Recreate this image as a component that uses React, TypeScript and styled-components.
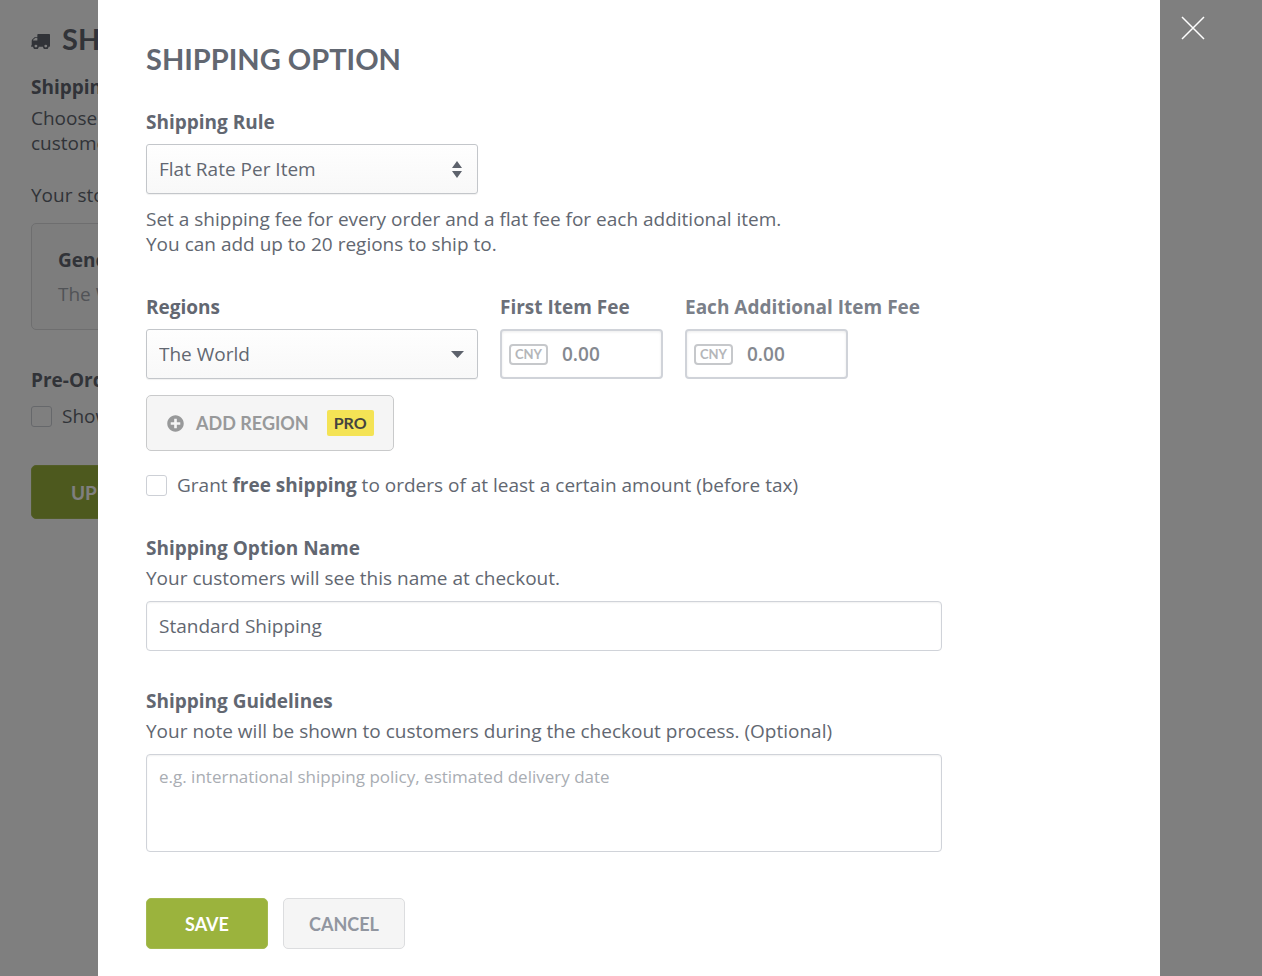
import React from "react";
import styled, { createGlobalStyle, css } from "styled-components";
import { FaPlusCircle } from "react-icons/fa";

const GlobalStyle = createGlobalStyle`
  *, *::before, *::after { box-sizing: border-box; }
  html, body { margin: 0; background: #fff; }
  body {
    font-family: "Open Sans", "Noto Sans", sans-serif;
    font-size: 19px;
    line-height: 25px;
    color: #626771;
  }
  button, input, select, textarea { font: inherit; color: inherit; margin: 0; }
`;

const displayFont = css`
  font-family: Lato, "Open Sans", sans-serif;
  font-weight: 700;
  text-transform: uppercase;
`;

/* Shared pieces */

const Title = styled.h2`
  ${displayFont}
  margin: 0;
  font-size: 29px;
  line-height: 36px;
`;

const Label = styled.label<{ $tone?: string }>`
  display: block;
  font-weight: 700;
  white-space: nowrap;
  color: ${(p) => p.$tone ?? "inherit"};
`;

const Text = styled.p`
  margin: 0;
`;

const Checkbox = styled.input.attrs({ type: "checkbox" })`
  appearance: none;
  flex: none;
  width: 21px;
  height: 21px;
  background: #fff;
  border: 1px solid #cdd0d6;
  border-radius: 3px;

  &:checked {
    background: #9bb33d;
  }
`;

const CheckRow = styled.label`
  display: flex;
  align-items: center;
  gap: 10px;
`;

const Button = styled.button<{ $primary?: boolean }>`
  ${displayFont}
  display: inline-flex;
  align-items: center;
  justify-content: center;
  height: 51px;
  padding: 2px 25px 0;
  min-width: 122px;
  border: 1px solid ${(p) => (p.$primary ? "#a4ba50" : "#dcdddf")};
  border-radius: 5px;
  background: ${(p) => (p.$primary ? "#9bb33d" : "#f5f5f5")};
  color: ${(p) => (p.$primary ? "#fff" : "#9196a0")};
  font-size: 18px;
  cursor: pointer;
`;

/* Page behind the dialog */

const Page = styled.main`
  min-height: 100vh;
  max-width: 900px;
  padding: 21px 31px;
  overflow: hidden;
`;

const PageHeader = styled.header`
  display: flex;
  align-items: center;
  gap: 12px;
  margin-bottom: 18px;

  svg {
    margin-top: 4px;
  }
`;

const PageSection = styled.section`
  display: flex;
  flex-direction: column;
  align-items: flex-start;
  gap: 6px;
  white-space: nowrap;
`;

const SectionName = styled.h3`
  margin: 0;
  font-size: 19px;
  line-height: 25px;
`;

const StoreNote = styled(Text)`
  margin-top: 21px;
`;

const OptionCard = styled.article`
  display: flex;
  flex-direction: column;
  gap: 9px;
  width: 100%;
  margin: 9px 0 38px;
  padding: 24px 26px 22px;
  border: 1px solid #dcdddf;
  border-radius: 5px;
  background: #fafafa;
`;

const Muted = styled.span`
  color: #a3a7ae;
`;

const PageCheckRow = styled(CheckRow)`
  margin-top: 5px;
`;

const UpdateButton = styled(Button)`
  height: 54px;
  margin-top: 30px;
  padding: 0 39px;
  font-size: 19px;
`;

/* Dialog */

const Overlay = styled.div`
  position: fixed;
  inset: 0;
  display: flex;
  align-items: flex-start;
  background: rgba(0, 0, 0, 0.5);
  overflow: hidden;
`;

const Dialog = styled.section`
  flex: 1;
  min-width: 0;
  height: 100%;
  margin-left: 98px;
  padding: 41px 48px 27px;
  background: #fff;
  overflow: hidden;
`;

const CloseRail = styled.div`
  display: flex;
  justify-content: flex-start;
  width: 102px;
  padding: 12px 17px;
`;

const CloseButton = styled.button`
  display: flex;
  padding: 4px;
  border: 0;
  background: none;
  cursor: pointer;
`;

const Form = styled.form`
  display: flex;
  flex-direction: column;
  align-items: flex-start;
  gap: 38px;
  max-width: 796px;
  margin-top: 33px;
`;

const Group = styled.div`
  width: 100%;
`;

const Hint = styled(Text)<{ $below?: boolean }>`
  margin: ${(p) => (p.$below ? "13px 0 0" : "5px 0 10px")};
`;

const SelectWrap = styled.div`
  position: relative;
  width: 332px;
  margin-top: 9px;

  svg {
    position: absolute;
    top: 0;
    right: 13px;
    height: 100%;
    pointer-events: none;
  }
`;

const Select = styled.select`
  appearance: none;
  display: block;
  width: 100%;
  height: 50px;
  padding: 0 40px 0 12px;
  border: 1px solid #c3c6ca;
  border-radius: 3px;
  background: linear-gradient(#fefefe, #f8f8f8);
  box-shadow: 0 1px 1px rgba(0, 0, 0, 0.06);
`;

const field = css`
  display: block;
  width: 100%;
  border: 1px solid #d0d3d9;
  border-radius: 4px;
  background: #fff;
  box-shadow: inset 0 1px 2px rgba(0, 0, 0, 0.06);
`;

const TextField = styled.input`
  ${field}
  height: 50px;
  padding: 0 12px;
`;

const TextArea = styled.textarea`
  ${field}
  height: 98px;
  padding: 9px 12px;
  font-size: 17px;
  resize: none;

  &::placeholder {
    color: #a9adb3;
    opacity: 1;
  }
`;

const RegionRow = styled.div`
  display: flex;
  align-items: flex-start;
  gap: 22px;
`;

const FeeBox = styled.div`
  display: flex;
  align-items: center;
  gap: 14px;
  width: 163px;
  height: 50px;
  margin-top: 9px;
  padding: 0 7px;
  border: 2px solid #d0d3d9;
  border-radius: 4px;
  background: #fff;
  box-shadow: inset 0 1px 3px rgba(0, 0, 0, 0.08);
`;

const Currency = styled.span`
  ${displayFont}
  flex: none;
  width: 39px;
  border: 2px solid #c6c8cb;
  border-radius: 4px;
  color: #b4b6b9;
  font-size: 13px;
  line-height: 17px;
  text-align: center;
`;

const FeeInput = styled.input`
  flex: 1;
  min-width: 0;
  padding: 0;
  border: 0;
  outline: 0;
  background: none;
  color: #858990;
  font-weight: 600;
`;

const AddRegion = styled(Button)`
  gap: 12px;
  height: 56px;
  margin: 16px 0 22px;
  padding: 0 19px 0 20px;
  border-color: #c9cacb;
  color: #98999a;
`;

const ProTag = styled.span`
  margin-left: 6px;
  padding: 0 7px;
  border-radius: 2px;
  background: #f4e355;
  color: #44443f;
  font-size: 16px;
  line-height: 26px;
`;

const Actions = styled.div`
  display: flex;
  gap: 15px;
  margin-top: 8px;
`;

const TruckIcon = () => (
  <svg width="19" height="15" viewBox="64 320 1728 1344" fill="currentColor" aria-hidden="true">
    <path d="M640 1408q0-52-38-90t-90-38-90 38-38 90 38 90 90 38 90-38 38-90zM256 896h384v-256h-158q-13 0-22 9l-195 195q-9 9-9 22v30zM1536 1408q0-52-38-90t-90-38-90 38-38 90 38 90 90 38 90-38 38-90zM1792 384v1024q0 15-4 26.500t-13.500 18.500-16.500 11.500-23.500 6-22.500 2-25.500 0-22.500-.5q0 106-75 181t-181 75-181-75-75-181H768q0 106-75 181t-181 75-181-75-75-181h-64q-3 0-22.500.5t-25.500 0-22.500-2-23.500-6-16.500-11.500-13.500-18.500-4-26.500q0-26 19-45t45-19v-320q0-8-.5-35t0-38 2.500-34.500 6.500-37 14-30.500 22.500-30l198-198q19-19 50.500-32t58.500-13h160V384q0-26 19-45t45-19h1024q26 0 45 19t19 45z" />
  </svg>
);

const SortIcon = () => (
  <svg width="14" viewBox="0 0 14 50" fill="#5d626c" aria-hidden="true">
    <path d="M6 17l5 7H1zM6 34l-5-7h10z" />
  </svg>
);

const CaretIcon = () => (
  <svg width="14" viewBox="0 0 14 50" fill="#5d626c" aria-hidden="true">
    <path d="M0 22h13l-6.500 7z" />
  </svg>
);

const Fee = ({ id, name, tone }: { id: string; name: string; tone: string }) => (
  <div>
    <Label htmlFor={id} $tone={tone}>
      {name}
    </Label>
    <FeeBox>
      <Currency>CNY</Currency>
      <FeeInput id={id} defaultValue="0.00" inputMode="decimal" />
    </FeeBox>
  </div>
);

const ShippingPage = () => (
  <Page>
    <PageHeader>
      <TruckIcon />
      <Title as="h1">Ship</Title>
    </PageHeader>
    <PageSection>
      <SectionName>Shipping</SectionName>
      <Text>
        Choose
        <br />
        customers
      </Text>
      <StoreNote>Your store</StoreNote>
      <OptionCard>
        <strong>General</strong>
        <Muted>The World</Muted>
      </OptionCard>
    </PageSection>
    <PageSection>
      <SectionName>Pre-Order</SectionName>
      <PageCheckRow>
        <Checkbox />
        Show
      </PageCheckRow>
      <UpdateButton $primary type="button">
        Update
      </UpdateButton>
    </PageSection>
  </Page>
);

export default function App() {
  return (
    <>
      <GlobalStyle />
      <ShippingPage />
      <Overlay>
        <Dialog role="dialog" aria-modal="true" aria-labelledby="dialog-title">
          <Title id="dialog-title">Shipping Option</Title>
          <Form onSubmit={(e) => e.preventDefault()}>
            <Group>
              <Label htmlFor="rule">Shipping Rule</Label>
              <SelectWrap>
                <Select id="rule">
                  <option>Flat Rate Per Item</option>
                </Select>
                <SortIcon />
              </SelectWrap>
              <Hint $below>
                Set a shipping fee for every order and a flat fee for each additional item.
                <br />
                You can add up to 20 regions to ship to.
              </Hint>
            </Group>

            <Group>
              <RegionRow>
                <div>
                  <Label htmlFor="region">Regions</Label>
                  <SelectWrap>
                    <Select id="region">
                      <option>The World</option>
                    </Select>
                    <CaretIcon />
                  </SelectWrap>
                </div>
                <Fee id="first-fee" name="First Item Fee" tone="#6c7079" />
                <Fee id="additional-fee" name="Each Additional Item Fee" tone="#7b8089" />
              </RegionRow>
              <AddRegion type="button">
                <FaPlusCircle size={17} aria-hidden="true" />
                Add Region
                <ProTag>Pro</ProTag>
              </AddRegion>
              <CheckRow>
                <Checkbox />
                <span>
                  Grant <strong>free shipping</strong> to orders of at least a certain amount (before tax)
                </span>
              </CheckRow>
            </Group>

            <Group>
              <Label htmlFor="option-name">Shipping Option Name</Label>
              <Hint>Your customers will see this name at checkout.</Hint>
              <TextField id="option-name" defaultValue="Standard Shipping" />
            </Group>

            <Group>
              <Label htmlFor="guidelines">Shipping Guidelines</Label>
              <Hint>Your note will be shown to customers during the checkout process. (Optional)</Hint>
              <TextArea
                id="guidelines"
                placeholder="e.g. international shipping policy, estimated delivery date"
              />
            </Group>

            <Actions>
              <Button $primary type="submit">
                Save
              </Button>
              <Button type="button">Cancel</Button>
            </Actions>
          </Form>
        </Dialog>
        <CloseRail>
          <CloseButton type="button" aria-label="Close">
            <svg width="24" height="24" viewBox="0 0 24 24" stroke="#fff" strokeWidth="1.5" aria-hidden="true">
              <path d="M1 1l22 22M23 1L1 23" />
            </svg>
          </CloseButton>
        </CloseRail>
      </Overlay>
    </>
  );
}
